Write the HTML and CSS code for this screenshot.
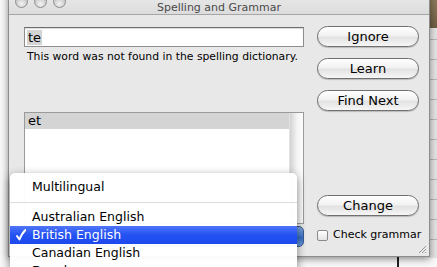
FILE: index.html
```html
<!DOCTYPE html>
<html lang="en">
<head>
    <meta charset="UTF-8">
    <title>Spelling and Grammar</title>
    <link rel="stylesheet" href="styles.css">
</head>
<body>
    <div class="backdrop"></div>

    <section class="window">
        <div class="titlebar">
            <div class="lights">
                <span class="light"></span>
                <span class="light"></span>
                <span class="light"></span>
            </div>
            <div class="title">Spelling and Grammar</div>
        </div>

        <div class="panel">
            <div class="left-col">
                <div class="field"><span class="sel">te</span></div>
                <p class="msg">This word was not found in the spelling dictionary.</p>
                <div class="list">
                    <div class="list-rows">
                        <div class="list-row current">et</div>
                    </div>
                    <div class="scroller"></div>
                </div>
                <div class="popup"></div>
            </div>

            <div class="right-col">
                <button class="aqua first">Ignore</button>
                <button class="aqua">Learn</button>
                <button class="aqua">Find Next</button>
                <button class="aqua change">Change</button>
                <label class="check"><span class="box"></span>Check grammar</label>
            </div>
        </div>

        <svg class="grip" width="9" height="9" viewBox="0 0 9 9">
            <path d="M8 1 L1 8 M8 4 L4 8 M8 7 L7 8" stroke="#9a9a9a" stroke-width="1"/>
        </svg>
    </section>

    <ul class="menu">
        <li class="item"><span class="mark"></span>Multilingual</li>
        <li class="sep"></li>
        <li class="item"><span class="mark"></span>Australian English</li>
        <li class="item selected">
            <span class="mark">
                <svg width="10" height="12" viewBox="0 0 10 12">
                    <path d="M1 7 L3.5 10.5 Q6 4 9.5 1" fill="none" stroke="#fff" stroke-width="2" stroke-linecap="round" stroke-linejoin="round"/>
                </svg>
            </span>British English
        </li>
        <li class="item"><span class="mark"></span>Canadian English</li>
        <li class="item"><span class="mark"></span>Dansk</li>
    </ul>
</body>
</html>
```

FILE: styles.css
```css
* {
    margin: 0;
    padding: 0;
    box-sizing: border-box;
    font-family: 'DejaVu Sans', 'Liberation Sans', sans-serif;
}

body {
    width: 437px;
    height: 267px;
    overflow: hidden;
    background-color: #f8f8f8;
    position: relative;
}

/* window behind, only a strip shows on the right */
.backdrop {
    position: absolute;
    left: 428px;
    top: 0;
    width: 9px;
    height: 258px;
    background:
        linear-gradient(#8c7a5c, #6e5e44) 0 0 / 100% 28px no-repeat,
        repeating-linear-gradient(#e4e4e4 0, #e4e4e4 19px, #b8b8b8 19px, #b8b8b8 20px);
}
body::after {
    content: '';
    position: absolute;
    left: 397px;
    top: 250px;
    width: 2px;
    height: 17px;
    background: #222;
}

/* --- WINDOW --- */
.window {
    position: absolute;
    left: 8px;
    top: -7px;
    width: 422px;
    height: 264px;
    background-color: #e8e8e8;
    border: 1px solid #8c8c8c;
    box-shadow: 0 2px 7px rgba(0, 0, 0, 0.45);
    z-index: 1;
}

.titlebar {
    height: 21px;
    display: flex;
    align-items: center;
    background: linear-gradient(#e9e9e9, #dcdcdc);
    border-bottom: 1px solid #a6a6a6;
    position: relative;
}
.lights { display: flex; gap: 6px; margin-left: 6px; margin-top: -6px; }
.light {
    width: 13px;
    height: 13px;
    border-radius: 50%;
    background: radial-gradient(circle at 50% 70%, #f4f4f4, #c4c4c4 70%, #b2b2b2);
    border: 1px solid #8e8e8e;
}
.title {
    position: absolute;
    left: 0;
    right: 0;
    top: 7px;
    text-align: center;
    font-size: 11px;
    line-height: 13px;
    color: #4a4a4a;
}

.panel {
    display: grid;
    grid-template-columns: 280px 102px;
    column-gap: 13px;
    padding: 12px 11px 0 15px;
}

.left-col { display: flex; flex-direction: column; }

.field {
    height: 20px;
    background: #fff;
    border: 1px solid #8e8e8e;
    border-top-color: #6e6e6e;
    box-shadow: inset 0 1px 1px rgba(0, 0, 0, 0.15);
    padding: 2px 2px;
    font-size: 13px;
    line-height: 15px;
    color: #000;
}
.sel { background-color: #d4d4d4; padding: 0 1px; }

.msg {
    margin-top: 3px;
    margin-left: 3px;
    font-size: 10.8px;
    line-height: 13px;
    white-space: nowrap;
    color: #000;
}

.list {
    margin-top: 49px;
    height: 112px;
    background: #fff;
    border: 1px solid #9a9a9a;
    display: flex;
}
.list-rows { flex: 1; }
.list-row { height: 16px; padding-left: 3px; font-size: 13px; line-height: 16px; }
.list-row.current { background-color: #d4d4d4; }
.scroller {
    width: 14px;
    background: linear-gradient(to right, #d2d2d2, #f4f4f4 55%, #fcfcfc);
    border-left: 1px solid #e2e2e2;
}

.popup {
    margin-top: 2px;
    height: 21px;
    border-radius: 5px;
    background: linear-gradient(#7fa6e0, #3f77c9 50%, #2e67bd 51%, #6e9be0);
    border: 1px solid #3a5a8c;
}

/* --- BUTTONS --- */
.right-col { display: flex; flex-direction: column; }

.aqua {
    height: 21px;
    border-radius: 11px;
    border: 1px solid #707070;
    background: linear-gradient(#ffffff, #f2f2f2 45%, #e2e2e2 55%, #f6f6f6);
    box-shadow: 0 1px 1px rgba(0, 0, 0, 0.2);
    font-size: 13px;
    line-height: 18px;
    color: #000;
    margin-top: 11px;
}
.aqua.first { margin-top: -1px; }
.aqua.change { margin-top: 84px; }

.check {
    display: flex;
    align-items: center;
    gap: 5px;
    margin-top: 12px;
    font-size: 11px;
    line-height: 14px;
    white-space: nowrap;
    color: #000;
}
.box {
    width: 11px;
    height: 11px;
    flex-shrink: 0;
    border: 1px solid #8a8a8a;
    border-radius: 2px;
    background: linear-gradient(#ffffff, #e4e4e4);
}

.grip { position: absolute; right: 2px; bottom: 2px; }

/* --- POPUP MENU --- */
.menu {
    position: absolute;
    left: 10px;
    top: 173px;
    width: 287px;
    height: 120px;
    list-style: none;
    padding-top: 5px;
    background-color: rgba(255, 255, 255, 0.97);
    border-radius: 5px 5px 0 0;
    box-shadow: 0 3px 10px rgba(0, 0, 0, 0.45);
    z-index: 2;
}
.item {
    display: flex;
    height: 18px;
    font-size: 12.5px;
    line-height: 18px;
    color: #000;
}
.mark { width: 22px; padding-left: 6px; flex-shrink: 0; display: flex; align-items: center; }
.item.selected {
    color: #fff;
    background: linear-gradient(#4f75f7, #2452f2 50%, #1c48ee);
}
.sep { height: 12px; position: relative; }
.sep::after { content: ''; position: absolute; left: 0; right: 0; top: 6px; height: 1px; background: #dcdcdc; }
```
